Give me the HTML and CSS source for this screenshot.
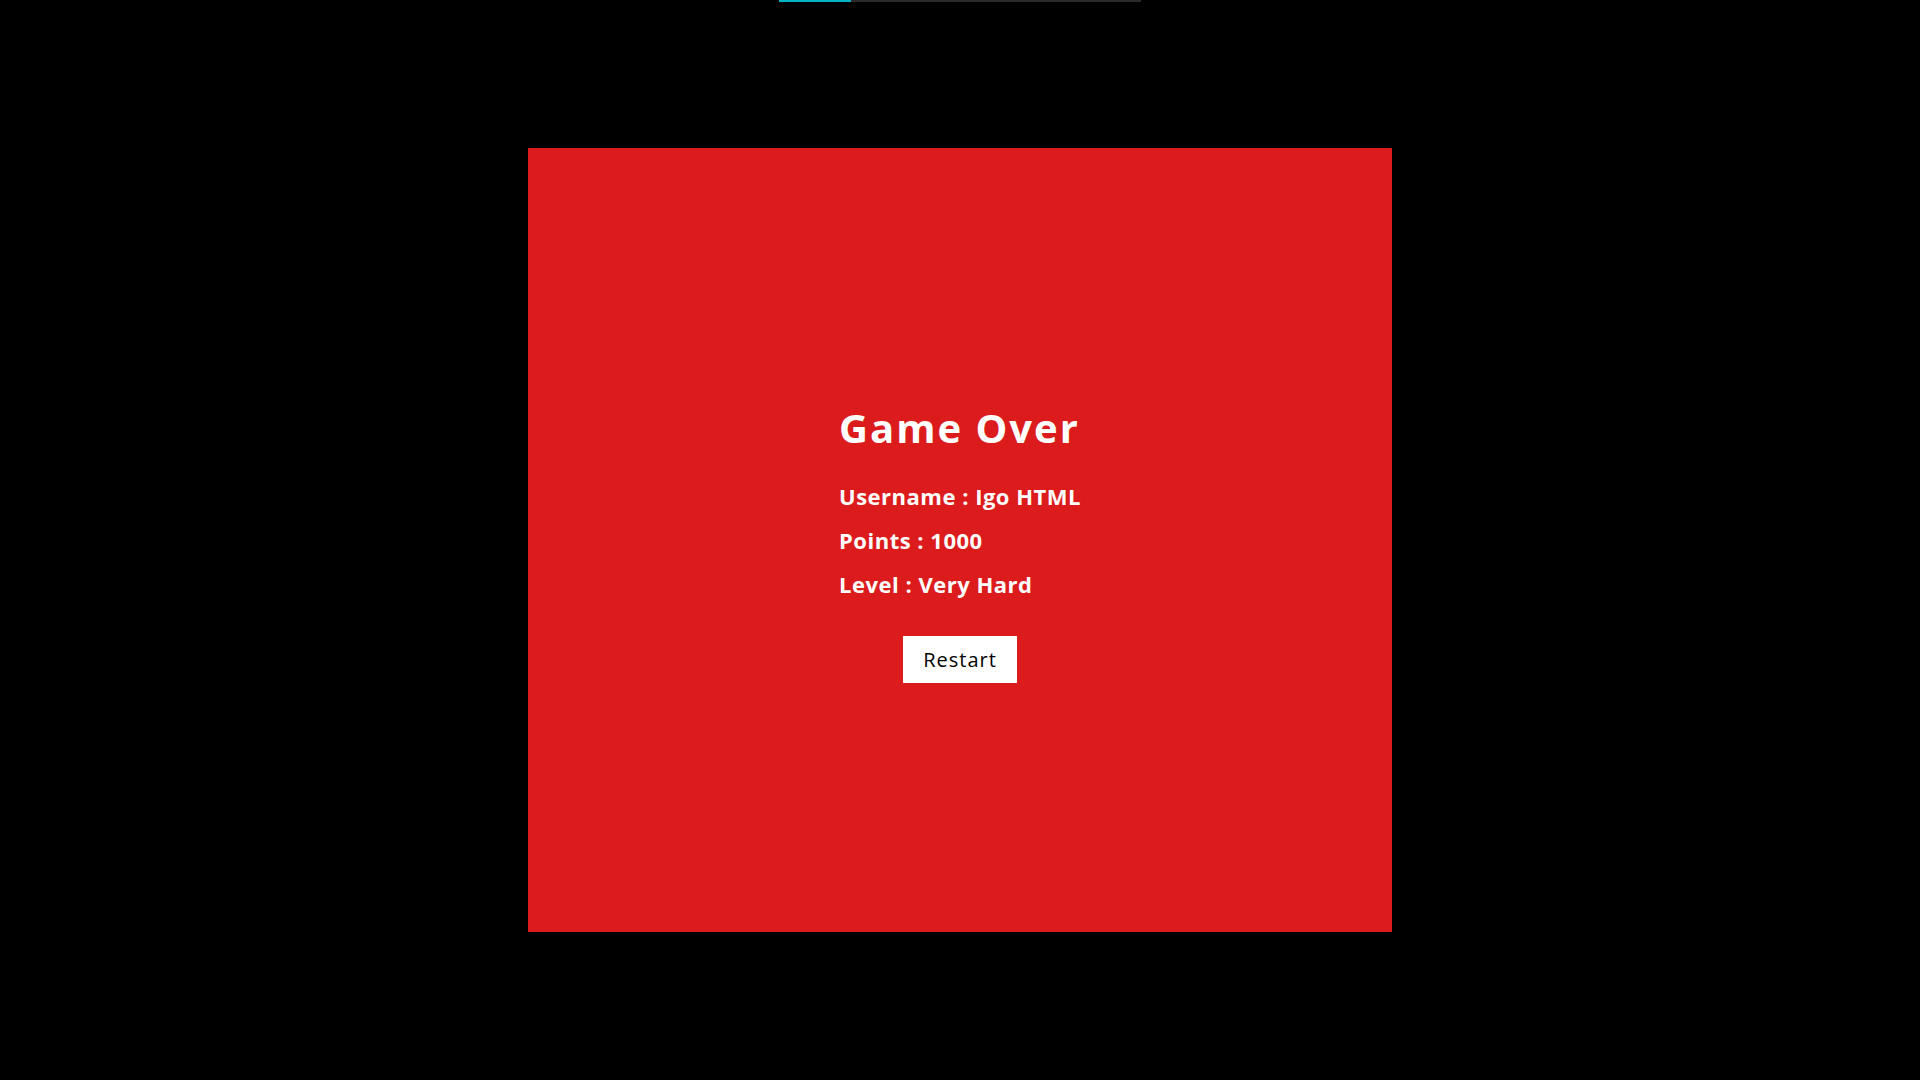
FILE: index.html
```html
<!DOCTYPE html>
<html lang="en">
<head>
<meta charset="utf-8">
<title>Game Over</title>
<link rel="stylesheet" href="styles.css">
</head>
<body>
<div class="progress"><div class="progress-fill"></div></div>
<main class="panel">
  <div class="summary">
    <h1 class="title">Game Over</h1>
    <p class="stat">Username : Igo HTML</p>
    <p class="stat">Points : 1000</p>
    <p class="stat">Level : Very Hard</p>
  </div>
  <button class="restart" type="button">Restart</button>
</main>
</body>
</html>
```
FILE: styles.css
```css
html, body {
  margin: 0;
  padding: 0;
  background: #000;
  height: 100%;
}
body {
  font-family: "Open Sans", "Noto Sans", sans-serif;
  display: flex;
  flex-direction: column;
  align-items: center;
}
.progress {
  width: 362px;
  height: 2px;
  background: #2a2a2a;
  display: flex;
}
.progress-fill {
  width: 72px;
  background: #00b4c4;
}
.panel {
  margin-top: 146px;
  width: 864px;
  height: 784px;
  box-sizing: border-box;
  padding-top: 6px;
  background: #dc1b1c;
  display: flex;
  flex-direction: column;
  align-items: center;
  justify-content: center;
  color: #fff;
}
.summary {
  display: flex;
  flex-direction: column;
  align-items: flex-start;
}
.title {
  margin: 0 0 22px 0;
  font-size: 40px;
  line-height: 48px;
  font-weight: 700;
  letter-spacing: 2px;
}
.stat {
  margin: 0;
  font-size: 22px;
  line-height: 44px;
  font-weight: 700;
  letter-spacing: 0.5px;
}
.restart {
  margin-top: 30px;
  width: 114px;
  height: 47px;
  border: none;
  background: #fff;
  color: #000;
  font-family: inherit;
  font-size: 20px;
  letter-spacing: 1px;
  padding: 0;
}
```
